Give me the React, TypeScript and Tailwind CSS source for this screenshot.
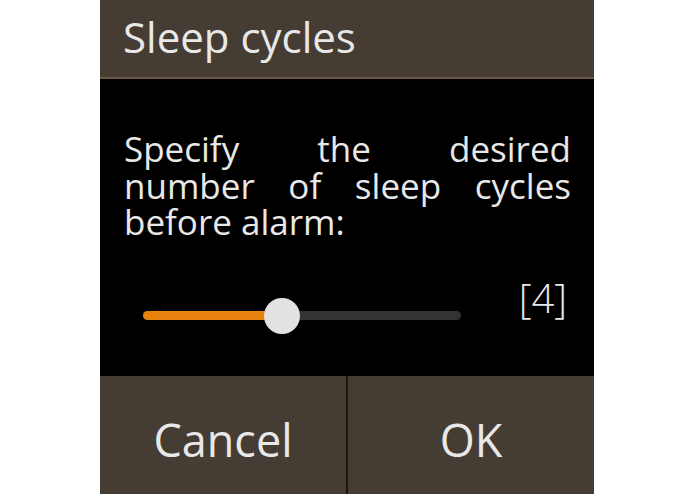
import React from "react";

export default function App() {
  const font = { fontFamily: '"Open Sans", "Noto Sans", sans-serif' };
  return (
    <div className="w-[695px] h-[494px] bg-white overflow-hidden" style={font}>
      <div className="ml-[100px] w-[494px] h-[494px] flex flex-col">
        <div className="h-[77px] shrink-0 bg-[#453c33] flex items-center pl-[23px] pb-[4px]">
          <span className="text-[42px] leading-none text-[#e8e8e8]">Sleep cycles</span>
        </div>
        <div className="h-[2px] shrink-0 bg-[#6b5640]" />
        <div className="h-[297px] shrink-0 bg-black flex flex-col">
          <div className="pt-[52px] pl-[24px] pr-[23px] text-[35px] leading-[36.5px] text-[#e8e8e8]">
            <div className="text-justify [text-align-last:justify]">Specify the desired</div>
            <div className="text-justify [text-align-last:justify]">number of sleep cycles</div>
            <div>before alarm:</div>
          </div>
          <div className="mt-[55px] flex items-start justify-between pl-[43px] pr-[27px]">
            <div className="relative w-[318px] h-[40px] flex items-center">
              <div className="w-full h-[9px] rounded-full bg-[#333333] flex">
                <div className="w-[139px] h-full rounded-full bg-[#e8820e]" />
              </div>
              <div className="absolute left-[121px] top-[2px] w-[36px] h-[36px] rounded-full bg-[#e2e2e2]" />
            </div>
            <div className="-mt-[18px] text-[40px] leading-[40px] font-light text-[#e8e8e8]">[4]</div>
          </div>
        </div>
        <div className="flex-1 bg-[#453c33] flex">
          <div className="w-[246px] flex items-center justify-center pt-[8px] text-[45px] leading-none text-[#e8e8e8]">
            Cancel
          </div>
          <div className="w-[2px] bg-[#1c1712]" />
          <div className="flex-1 flex items-center justify-center pt-[8px] text-[45px] leading-none text-[#e8e8e8]">
            OK
          </div>
        </div>
      </div>
    </div>
  );
}
